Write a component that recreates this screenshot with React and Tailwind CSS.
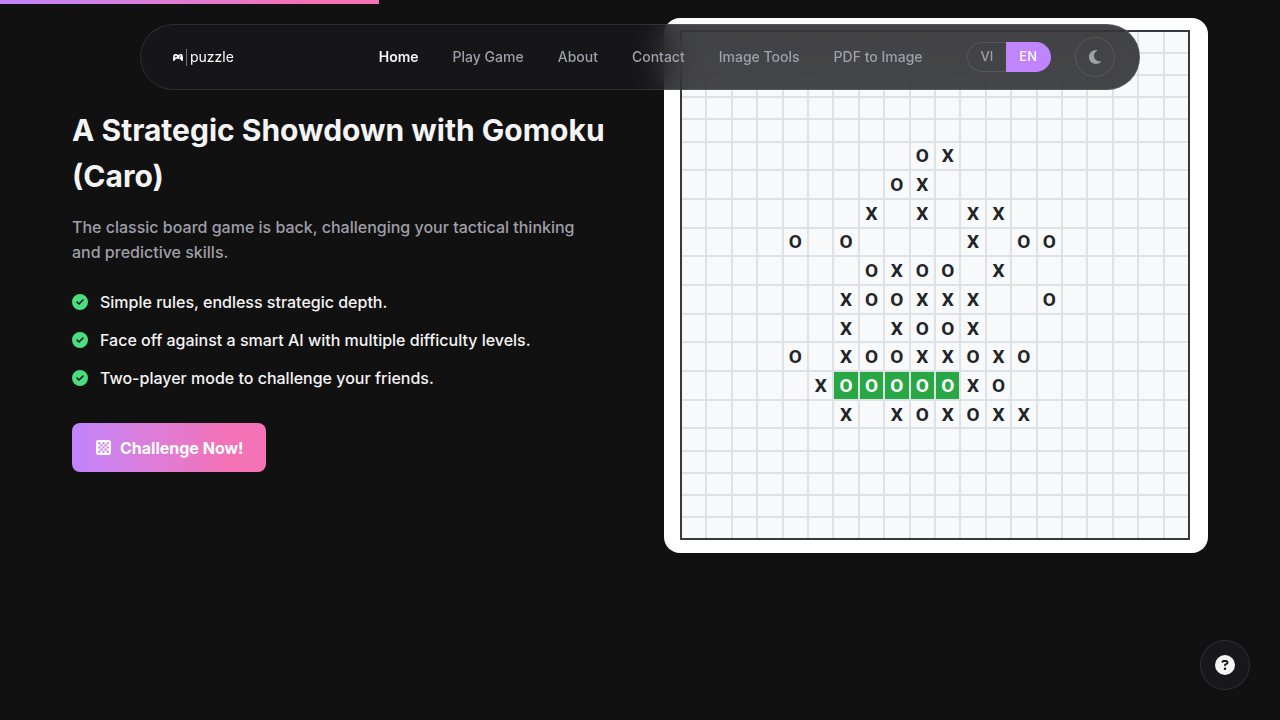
import { useState } from 'react';
import { FaChessBoard, FaCircleCheck, FaCircleQuestion, FaMoon } from 'react-icons/fa6';

const LINKS = ['Home', 'Play Game', 'About', 'Contact', 'Image Tools', 'PDF to Image'];

const FEATURES = [
  'Simple rules, endless strategic depth.',
  'Face off against a smart AI with multiple difficulty levels.',
  'Two-player mode to challenge your friends.',
];

// one string per row, lowercase "w" is a winning O
const BOARD = [
  '....................',
  '....................',
  '....................',
  '....................',
  '....................',
  '.........OX.........',
  '........OX..........',
  '.......X.X.XX.......',
  '....O.O....X.OO.....',
  '.......OXOO.X.......',
  '......XOOXXX..O.....',
  '......X.XOOX........',
  '....O.XOOXXOXO......',
  '.....XwwwwwXO.......',
  '......X.XOXOXX......',
  '....................',
  '....................',
  '....................',
  '....................',
  '....................',
];

function Logo() {
  return (
    <a href="#" className="flex items-center gap-[3px] text-white" aria-label="puzzle">
      <svg viewBox="0 0 20 14" className="w-[10px] h-[7px] mt-px" fill="currentColor">
        <path fillRule="evenodd" d="M4 0h3l1.500 1.500h4L14 0h3c1.500 0 2.200 2 2.600 5 .4 3 .8 8.500-.8 9-1.700.4-3-2.500-4.700-4.500H5.900C4.200 11.500 2.900 14.400 1.200 14-.4 13.500 0 8 .4 5 .8 2 1.500 0 4 0Zm1 3v1.500H3.500V6H5v1.500h1.500V6H8V4.500H6.500V3H5Zm9 0v1.800h1.800V3H14Zm-1.800 2.500v1.800H14V5.500h-1.800Z" />
      </svg>
      <span className="w-px h-[17px] bg-zinc-500" />
      <span className="text-sm">puzzle</span>
    </a>
  );
}

function Navbar({ lang, onLangChange }) {
  const langClass = (code) =>
    lang === code ? 'border-[#c084fc] bg-[#c084fc] text-white' : 'border-white/10 text-zinc-400';

  return (
    <header className="fixed top-6 inset-x-0 z-20 px-6">
      <div className="max-w-[1000px] h-[66px] mx-auto pl-8 pr-6 flex items-center rounded-full border border-white/10 bg-[#18181b]/80 backdrop-blur-lg">
        <Logo />
        <nav className="ml-auto mr-11 flex gap-[34px] text-sm font-medium">
          {LINKS.map(l => (
            <a key={l} href="#" className={l === 'Home' ? 'font-semibold text-zinc-100' : 'text-zinc-400'}>{l}</a>
          ))}
        </nav>
        <div className="flex h-[30px] mr-6 text-[13px] font-medium">
          <button className={`px-[13px] border border-r-0 rounded-l-full ${langClass('VI')}`} onClick={() => onLangChange('VI')}>VI</button>
          <button className={`px-[13px] border border-l-0 rounded-r-full ${langClass('EN')}`} onClick={() => onLangChange('EN')}>EN</button>
        </div>
        <button className="size-10 flex items-center justify-center rounded-full border border-white/10 text-zinc-400" aria-label="Toggle theme">
          <FaMoon size={16} />
        </button>
      </div>
    </header>
  );
}

function Board() {
  return (
    <div className="bg-white rounded-2xl pl-4 pr-[18px] pt-3 pb-[13px]">
      <div className="aspect-square grid grid-cols-20 grid-rows-[repeat(5,43fr)_repeat(10,57fr)_repeat(5,43fr)] gap-[2px] border-2 border-[#343a40] bg-[#dee2e6] font-[Roboto,sans-serif] text-[19px] leading-none font-bold text-[#212529]">
        {BOARD.flatMap((row, y) => [...row].map((cell, x) => (
          <div
            key={`${y}-${x}`}
            className={`min-w-0 min-h-0 flex items-center justify-center ${cell === 'w' ? 'bg-[#28a745] text-white' : 'bg-[#f8f9fa]'}`}
          >
            {cell === '.' ? '' : cell === 'w' ? 'O' : cell}
          </div>
        )))}
      </div>
    </div>
  );
}

export default function App() {
  const [lang, setLang] = useState('EN');

  return (
    <div className="min-h-screen bg-[#111111] text-zinc-100 font-[Inter,sans-serif]">
      {/* Scroll progress */}
      <div className="fixed top-0 left-0 z-30 h-1 bg-linear-to-r from-[#c084fc] to-[#f472b6] to-80%" style={{ width: '29.6%' }} />

      <Navbar lang={lang} onLangChange={setLang} />

      <main className="max-w-[1184px] mx-auto px-6 pt-[18px] grid grid-cols-2 gap-12 items-center">
        <section className="pt-2">
          <h1 className="text-[30px] leading-[46px] font-bold">A Strategic Showdown with Gomoku (Caro)</h1>
          <p className="mt-4 pr-6 leading-[25px] font-medium text-zinc-400">
            The classic board game is back, challenging your tactical thinking and predictive skills.
          </p>
          <ul className="mt-6 space-y-3 font-medium">
            {FEATURES.map(f => (
              <li key={f} className="flex items-center gap-3 leading-[26px]">
                <FaCircleCheck className="size-4 text-[#4ade80]" />
                {f}
              </li>
            ))}
          </ul>
          <button className="mt-8 h-[49px] px-[23px] inline-flex items-center gap-2 rounded-lg bg-linear-to-r from-[#c084fc] to-[#f472b6] to-80% font-bold text-white">
            <FaChessBoard size={17} />
            Challenge Now!
          </button>
        </section>

        <Board />
      </main>

      <button className="fixed right-[30px] bottom-[30px] size-[50px] flex items-center justify-center rounded-full border border-white/10 bg-[#18181b]" aria-label="Help">
        <FaCircleQuestion size={20} />
      </button>
    </div>
  );
}
